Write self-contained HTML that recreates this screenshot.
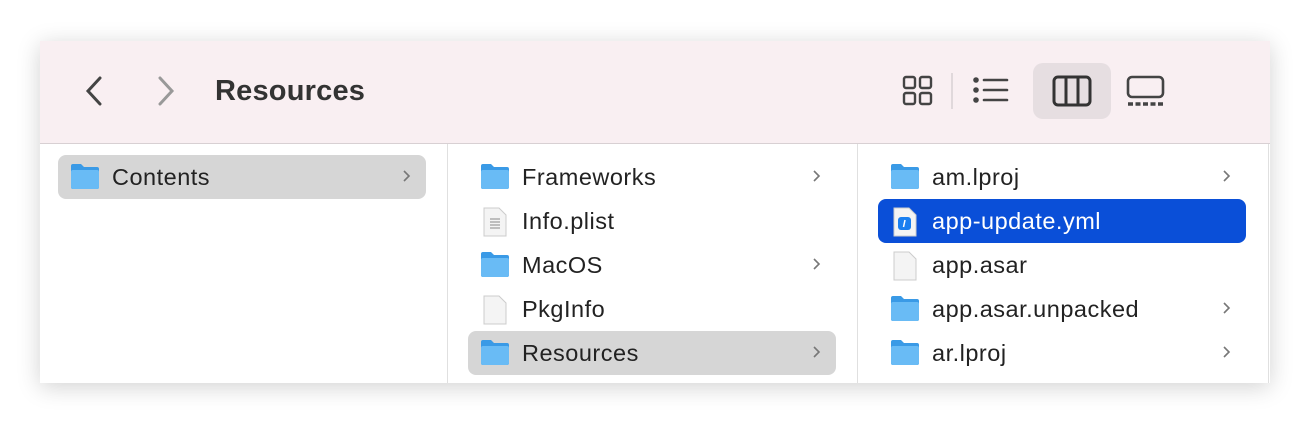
<!DOCTYPE html><html><head><style>
body{margin:0;width:1310px;height:424px;background:#fff;font-family:"Liberation Sans",sans-serif;position:relative;overflow:hidden}
.win{position:absolute;left:40px;top:41px;width:1230px;height:342px;background:#fff;box-shadow:0 4px 22px rgba(0,0,0,.18);overflow:hidden}
.tb{position:absolute;left:0;top:0;width:1230px;height:102px;background:#f9eff2;border-bottom:1px solid #d8d0d3}
.title{position:absolute;left:175px;top:34px;font-size:29px;font-weight:bold;color:#333;letter-spacing:0.2px}
.div{position:absolute;top:103px;width:1px;height:240px;background:#e0e0e0}
.row{position:absolute;height:44px;width:368px;border-radius:8px;font-size:23.5px;letter-spacing:0.5px;color:#222}
.row span{position:absolute;left:54px;top:9px}
.sel{background:#d6d6d6}.blue{background:#0a4fd8;color:#fff}
.chev{position:absolute;right:14px;top:15px}
.ic{position:absolute;left:12px;top:8px}
</style></head><body>
<div class="win">
<div class="tb">
<svg style="position:absolute;left:44px;top:35px" width="20" height="30"><path d="M16 2 L4 15 L16 28" stroke="#444" stroke-width="3" fill="none" stroke-linecap="round"/></svg>
<svg style="position:absolute;left:116px;top:35px" width="20" height="30"><path d="M4 2 L16 15 L4 28" stroke="#999" stroke-width="3" fill="none" stroke-linecap="round"/></svg>
<div class="title">Resources</div>
<svg style="position:absolute;left:862px;top:34px" width="32" height="32" fill="none" stroke="#444" stroke-width="2.4"><rect x="2" y="2" width="11" height="11" rx="2"/><rect x="18" y="2" width="11" height="11" rx="2"/><rect x="2" y="18" width="11" height="11" rx="2"/><rect x="18" y="18" width="11" height="11" rx="2"/></svg>
<div style="position:absolute;left:911px;top:32px;width:2px;height:36px;background:#e0d8db"></div>
<svg style="position:absolute;left:933px;top:36px" width="38" height="28" stroke="#444" stroke-width="2.6" stroke-linecap="round"><circle cx="3" cy="3" r="1.5" fill="#444"/><circle cx="3" cy="13" r="1.5" fill="#444"/><circle cx="3" cy="23" r="1.5" fill="#444"/><path d="M11 3H34M11 13H34M11 23H34"/></svg>
<div style="position:absolute;left:993px;top:22px;width:78px;height:56px;border-radius:10px;background:#e6dee1"></div>
<svg style="position:absolute;left:1012px;top:34px" width="40" height="32" fill="none" stroke="#333" stroke-width="3"><rect x="2" y="2" width="36" height="28" rx="4"/><path d="M14 2V30M26 2V30"/></svg>
<svg style="position:absolute;left:1086px;top:34px" width="40" height="32" fill="none" stroke="#444" stroke-width="2.6"><rect x="2" y="2" width="35" height="20" rx="4"/><path d="M2 29H38" stroke-dasharray="5 2.5" stroke-width="3.5"/></svg>
</div>
<div class="div" style="left:407px"></div><div class="div" style="left:817px"></div><div class="div" style="left:1228px"></div>

<svg width="0" height="0" style="position:absolute"><defs>
<g id="f"><path d="M1 3a2 2 0 0 1 2-2h8l3 3h13a2 2 0 0 1 2 2v18a2 2 0 0 1-2 2H3a2 2 0 0 1-2-2z" fill="#3a9ae6"/><rect x="1" y="7" width="28" height="19" rx="2" fill="#69bbf5"/></g>
<g id="d"><path d="M2 1h15l7 7v21H2z" fill="#f4f4f4" stroke="#ccc"/></g>
<g id="c"><path d="M2 1l5 5-5 5" stroke="#777" stroke-width="1.6" fill="none"/></g>
</defs></svg>

<div class="row sel" style="left:18px;top:114px"><svg class="ic" width="32" height="28"><use href="#f"/></svg><span>Contents</span><svg class="chev" width="10" height="13"><use href="#c"/></svg></div>

<div class="row" style="left:428px;top:114px"><svg class="ic" width="32" height="28"><use href="#f"/></svg><span>Frameworks</span><svg class="chev" width="10" height="13"><use href="#c"/></svg></div>
<div class="row" style="left:428px;top:158px"><svg class="ic" style="left:14px" width="28" height="30"><use href="#d"/><path d="M8 12h10M8 15h10M8 18h10M8 21h10" stroke="#888"/></svg><span>Info.plist</span></div>
<div class="row" style="left:428px;top:202px"><svg class="ic" width="32" height="28"><use href="#f"/></svg><span>MacOS</span><svg class="chev" width="10" height="13"><use href="#c"/></svg></div>
<div class="row" style="left:428px;top:246px"><svg class="ic" style="left:14px" width="28" height="30"><use href="#d"/></svg><span>PkgInfo</span></div>
<div class="row sel" style="left:428px;top:290px"><svg class="ic" width="32" height="28"><use href="#f"/></svg><span>Resources</span><svg class="chev" width="10" height="13"><use href="#c"/></svg></div>

<div class="row" style="left:838px;top:114px"><svg class="ic" width="32" height="28"><use href="#f"/></svg><span>am.lproj</span><svg class="chev" width="10" height="13"><use href="#c"/></svg></div>
<div class="row blue" style="left:838px;top:158px"><svg class="ic" style="left:14px" width="28" height="30"><use href="#d"/><rect x="6" y="10" width="13" height="13" rx="3" fill="#1a7ff0"/><path d="M13 13l-1.5 7" stroke="#fff" stroke-width="1.5"/></svg><span>app-update.yml</span></div>
<div class="row" style="left:838px;top:202px"><svg class="ic" style="left:14px" width="28" height="30"><use href="#d"/></svg><span>app.asar</span></div>
<div class="row" style="left:838px;top:246px"><svg class="ic" width="32" height="28"><use href="#f"/></svg><span>app.asar.unpacked</span><svg class="chev" width="10" height="13"><use href="#c"/></svg></div>
<div class="row" style="left:838px;top:290px"><svg class="ic" width="32" height="28"><use href="#f"/></svg><span>ar.lproj</span><svg class="chev" width="10" height="13"><use href="#c"/></svg></div>
<div class="row" style="left:838px;top:334px"><svg class="ic" width="32" height="28"><use href="#f"/></svg></div>
</div>
</body></html>
